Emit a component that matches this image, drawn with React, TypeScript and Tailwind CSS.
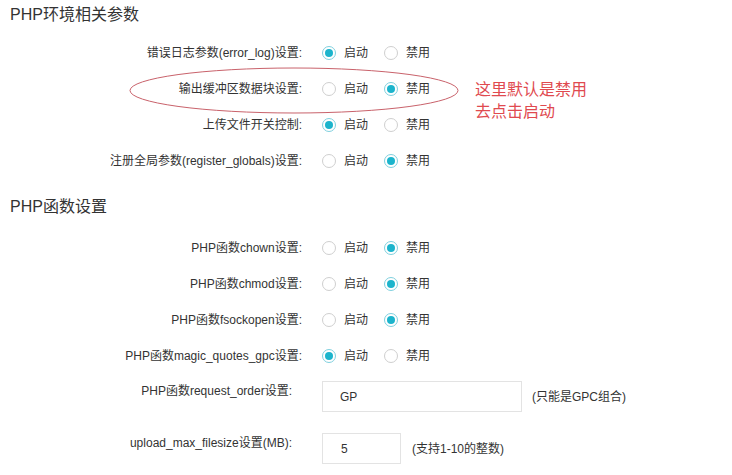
import { useState } from 'react';

type RadioRowProps = {
  label: string;
  defaultOn: boolean;
};

function Radio({ checked, onClick, text }: { checked: boolean; onClick: () => void; text: string }) {
  return (
    <label className="flex items-center cursor-pointer" onClick={onClick}>
      <span
        className={
          checked
            ? 'w-[14px] h-[14px] rounded-full border border-[#7fd0de] bg-white flex items-center justify-center'
            : 'w-[14px] h-[14px] rounded-full border border-[#cfcfcf] bg-white'
        }
      >
        {checked && <span className="w-[8px] h-[8px] rounded-full bg-[#1cb4cc]" />}
      </span>
      <span className="ml-[8px] text-[12px] text-[#333]">{text}</span>
    </label>
  );
}

function RadioRow({ label, defaultOn }: RadioRowProps) {
  const [on, setOn] = useState(defaultOn);
  return (
    <div className="flex items-center h-[36px]">
      <div className="w-[302px] text-right text-[12px] text-[#333]">{label}</div>
      <div className="ml-[20px] flex items-center gap-[16px]">
        <Radio checked={on} onClick={() => setOn(true)} text="启动" />
        <Radio checked={!on} onClick={() => setOn(false)} text="禁用" />
      </div>
    </div>
  );
}

export default function App() {
  return (
    <div
      className="relative w-[732px] h-[475px] bg-white pl-[10px] text-[#333]"
      style={{ fontFamily: '"Liberation Sans", "Noto Sans CJK SC", sans-serif' }}
    >
      <h2 className="pt-[5px] text-[16px] leading-[20px] font-normal text-[#333]">PHP环境相关参数</h2>
      <div className="mt-[10px] -ml-[10px]">
        <RadioRow label="错误日志参数(error_log)设置:" defaultOn={true} />
        <RadioRow label="输出缓冲区数据块设置:" defaultOn={false} />
        <RadioRow label="上传文件开关控制:" defaultOn={true} />
        <RadioRow label="注册全局参数(register_globals)设置:" defaultOn={false} />
      </div>

      <h2 className="mt-[18px] text-[16px] leading-[20px] font-normal text-[#333]">PHP函数设置</h2>
      <div className="mt-[13px] -ml-[10px]">
        <RadioRow label="PHP函数chown设置:" defaultOn={false} />
        <RadioRow label="PHP函数chmod设置:" defaultOn={false} />
        <RadioRow label="PHP函数fsockopen设置:" defaultOn={false} />
        <RadioRow label="PHP函数magic_quotes_gpc设置:" defaultOn={true} />

        <div className="mt-[7px] flex items-start">
          <div className="w-[292px] pt-[1px] text-right text-[12px] leading-[18px]">PHP函数request_order设置:</div>
          <input
            defaultValue="GP"
            className="ml-[30px] w-[200px] h-[31px] border border-[#e3e3e3] pl-[17px] text-[12px] text-[#333] outline-none"
          />
          <span className="ml-[10px] self-center text-[12px]">(只能是GPC组合)</span>
        </div>

        <div className="mt-[21px] flex items-start">
          <div className="w-[292px] pt-[1px] text-right text-[12px] leading-[18px]">upload_max_filesize设置(MB):</div>
          <input
            defaultValue="5"
            className="ml-[30px] w-[79px] h-[31px] border border-[#e3e3e3] pl-[18px] text-[12px] text-[#333] outline-none"
          />
          <span className="ml-[11px] self-center text-[12px]">(支持1-10的整数)</span>
        </div>
      </div>

      {/* annotation overlay */}
      <svg className="absolute left-0 top-0 pointer-events-none" width="732" height="475">
        <ellipse cx="294" cy="90.5" rx="164" ry="22.5" fill="none" stroke="#c9626b" strokeWidth="1" />
      </svg>
      <div className="absolute left-[475px] top-[79px] text-[16px] leading-[22px] text-[#e04a4f]">
        <div>这里默认是禁用</div>
        <div>去点击启动</div>
      </div>
    </div>
  );
}
